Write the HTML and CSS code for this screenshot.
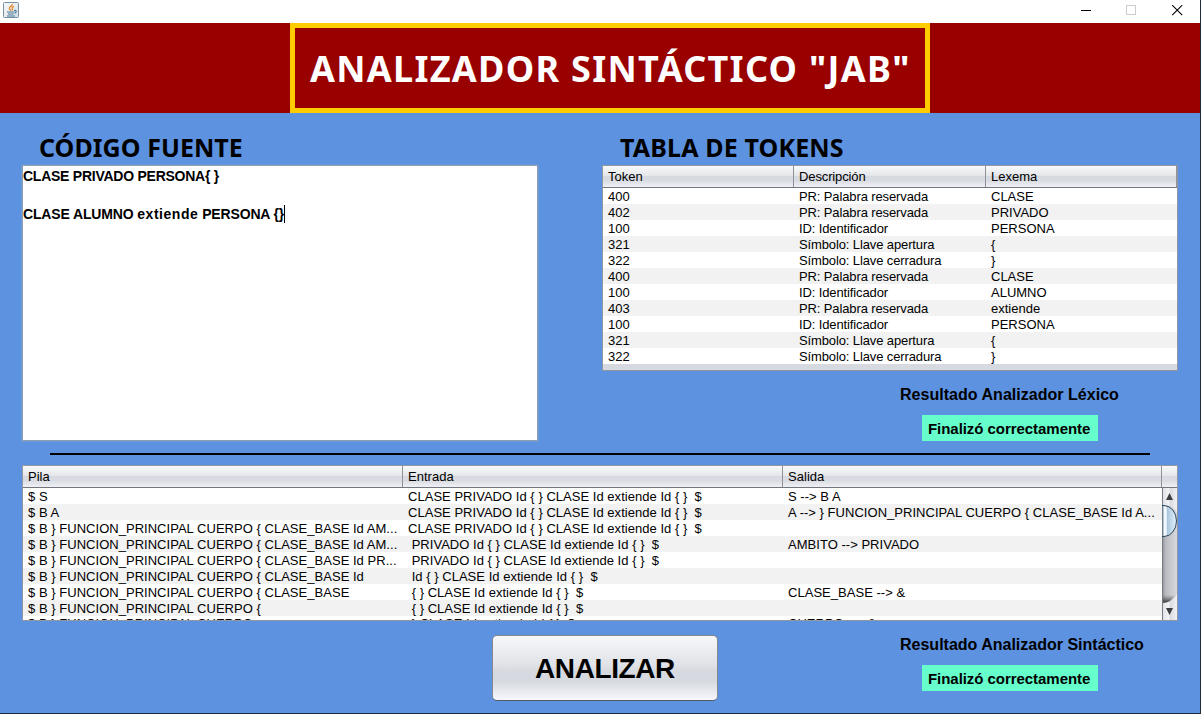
FILE: index.html
```html
<!DOCTYPE html>
<html lang="es">
<head>
<meta charset="utf-8">
<title>Analizador Sintáctico</title>
<link rel="stylesheet" href="styles.css">
</head>
<body>
<div class="window">
  <div class="titlebar">
    <svg class="java" width="16" height="16" viewBox="0 0 16 16">
      <defs><linearGradient id="jb" x2="1" y2="1"><stop offset="0" stop-color="#f8fafb"/><stop offset="1" stop-color="#d3dde4"/></linearGradient></defs>
      <rect x=".5" y=".5" width="15" height="15" rx="1" fill="url(#jb)" stroke="#7890a2"/>
      <path d="M9.500 2c.300 1.500-3.200 2.300-3.200 4.200 0 1 1 1.400 1.400 2.500M11 4.300c-1.600.6-2.400 1.300-1.800 2.100.6.700.2 1.400-.5 2.100" fill="none" stroke="#e8862a" stroke-width="1.300"/>
      <path d="M4 10h7M5 12h5.500M4 14h8" stroke="#4b7b9c" stroke-width="1.200"/>
      <path d="M11 8.600c3-.8 2.800 2 .2 2.600" fill="none" stroke="#4b7b9c" stroke-width="1.200"/>
    </svg>
    <svg class="controls" width="102" height="11" viewBox="0 0 102 11">
      <path d="M0 5.500h10" stroke="#000"/>
      <rect x="45.500" y=".5" width="9" height="9" fill="none" stroke="#ccc"/>
      <path d="M91.200.2l10 10M101.200.2l-10 10" stroke="#000" stroke-width="1.100"/>
    </svg>
  </div>
  <div class="banner"><h1><span>ANALIZADOR SINTÁCTICO "JAB"</span></h1></div>
  <div class="upper">
    <div class="source">
      <h2 class="h-source">CÓDIGO FUENTE</h2>
      <div class="editor"><div class="l1">CLASE PRIVADO PERSONA{ }</div><div>&nbsp;</div><div class="l3">CLASE ALUMNO <span class="word">extiende</span> PERSONA {}<i class="caret"></i></div></div>
    </div>
    <div class="tokens">
      <h2 class="h-tokens">TABLA DE TOKENS</h2>
      <div class="table token-table">
        <div class="row head"><span>Token</span><span>Descripción</span><span>Lexema</span></div>
        <div class="row"><span>400</span><span>PR: Palabra reservada</span><span>CLASE</span></div>
        <div class="row"><span>402</span><span>PR: Palabra reservada</span><span>PRIVADO</span></div>
        <div class="row"><span>100</span><span>ID: Identificador</span><span>PERSONA</span></div>
        <div class="row"><span>321</span><span>Símbolo: Llave apertura</span><span>{</span></div>
        <div class="row"><span>322</span><span>Símbolo: Llave cerradura</span><span>}</span></div>
        <div class="row"><span>400</span><span>PR: Palabra reservada</span><span>CLASE</span></div>
        <div class="row"><span>100</span><span>ID: Identificador</span><span>ALUMNO</span></div>
        <div class="row"><span>403</span><span>PR: Palabra reservada</span><span>extiende</span></div>
        <div class="row"><span>100</span><span>ID: Identificador</span><span>PERSONA</span></div>
        <div class="row"><span>321</span><span>Símbolo: Llave apertura</span><span>{</span></div>
        <div class="row"><span>322</span><span>Símbolo: Llave cerradura</span><span>}</span></div>
      </div>
      <div class="result r-lex"><div class="label lex">Resultado Analizador Léxico</div><div class="ok">Finalizó correctamente</div></div>
    </div>
  </div>
  <div class="rule"></div>
  <div class="table stack-table">
    <div class="row head"><span>Pila</span><span>Entrada</span><span>Salida</span><span></span></div>
    <div class="viewport">
      <div class="rows">
        <div class="row"><span>$ S</span><span>CLASE PRIVADO Id { } CLASE Id extiende Id { }  $</span><span>S --&gt; B A</span></div>
        <div class="row"><span>$ B A</span><span>CLASE PRIVADO Id { } CLASE Id extiende Id { }  $</span><span>A --&gt; } FUNCION_PRINCIPAL CUERPO { CLASE_BASE Id A...</span></div>
        <div class="row"><span>$ B } FUNCION_PRINCIPAL CUERPO { CLASE_BASE Id AM...</span><span>CLASE PRIVADO Id { } CLASE Id extiende Id { }  $</span><span></span></div>
        <div class="row"><span>$ B } FUNCION_PRINCIPAL CUERPO { CLASE_BASE Id AM...</span><span> PRIVADO Id { } CLASE Id extiende Id { }  $</span><span>AMBITO --&gt; PRIVADO</span></div>
        <div class="row"><span>$ B } FUNCION_PRINCIPAL CUERPO { CLASE_BASE Id PR...</span><span> PRIVADO Id { } CLASE Id extiende Id { }  $</span><span></span></div>
        <div class="row"><span>$ B } FUNCION_PRINCIPAL CUERPO { CLASE_BASE Id</span><span> Id { } CLASE Id extiende Id { }  $</span><span></span></div>
        <div class="row"><span>$ B } FUNCION_PRINCIPAL CUERPO { CLASE_BASE</span><span> { } CLASE Id extiende Id { }  $</span><span>CLASE_BASE --&gt; &amp;</span></div>
        <div class="row"><span>$ B } FUNCION_PRINCIPAL CUERPO {</span><span> { } CLASE Id extiende Id { }  $</span><span></span></div>
        <div class="row"><span>$ B } FUNCION_PRINCIPAL CUERPO</span><span> } CLASE Id extiende Id { }  $</span><span>CUERPO --&gt; &amp;</span></div>
      </div>
      <svg class="scroll" width="15" height="132" viewBox="0 0 15 132">
        <defs>
          <linearGradient id="tr"><stop offset="0" stop-color="#8e9095"/><stop offset=".25" stop-color="#b9bbc1"/><stop offset="1" stop-color="#d8d9de"/></linearGradient>
          <linearGradient id="bt"><stop offset="0" stop-color="#dcdfe4"/><stop offset=".45" stop-color="#f3f4f6"/><stop offset=".55" stop-color="#d8dbe1"/><stop offset="1" stop-color="#eff1f5"/></linearGradient>
          <linearGradient id="th"><stop offset="0" stop-color="#8fb0cb"/><stop offset=".12" stop-color="#fafcff"/><stop offset=".25" stop-color="#edf5fa"/><stop offset=".3" stop-color="#a9c5db"/><stop offset="1" stop-color="#e2f3fe"/></linearGradient>
          <linearGradient id="sh" x2="0" y2="1"><stop offset="0" stop-color="#555" stop-opacity="0"/><stop offset="1" stop-color="#333"/></linearGradient>
        </defs>
        <rect width="15" height="132" fill="url(#tr)"/>
        <path d="M0 107h14L8 113Q6 115 0 115z" fill="url(#sh)"/>
        <path d="M0 0h15v24Q10 17 0 17zM0 132V115Q10 115 15 106v26z" fill="url(#bt)"/>
        <path d="M.5 0v132" stroke="#777b83"/>
        <path d="M1 17.500A13.500 15.500 0 0 1 1 48.500z" fill="url(#th)"/>
        <path d="M0 17.500h2A12.500 15.500 0 0 1 2 48.500H0" fill="none" stroke="#2c465b"/>
        <path d="M4 12l3.500-7L11 12zM4 120l3.500 7 3.500-7z" fill="#3b3d41"/>
      </svg>
    </div>
  </div>
  <div class="footer">
    <button class="analyze"><span>ANALIZAR</span></button>
    <div class="result r-sin"><div class="label sin">Resultado Analizador Sintáctico</div><div class="ok">Finalizó correctamente</div></div>
  </div>
</div>
</body>
</html>
```
FILE: styles.css
```css
* { box-sizing: border-box; }
body { margin: 0; background: #1d2b3b; font-family: "Liberation Sans", Arial, sans-serif; color: #000; overflow: hidden; }
.window { width: 1200px; height: 713px; background: #5c92e0; overflow: hidden; }
.titlebar { height: 23px; background: #fff; display: flex; justify-content: space-between; padding: 2px 17px 0 3px; }
.controls { margin-top: 3px; }
.banner { height: 90px; background: #900; padding-left: 290px; }
h1 { margin: 0; width: 640px; height: 90px; border: 5px solid #fc0; padding-left: 15px; color: #fff; font: bold 36px/82px "Noto Sans", sans-serif; letter-spacing: 1.3px; white-space: nowrap; }
h2 { margin: 0; height: 52px; padding-top: 18px; font: bold 25px/32px "Noto Sans", sans-serif; white-space: nowrap; }
.upper { height: 340px; display: flex; }
.source { width: 602px; padding-left: 22px; }
.h-source { padding-left: 17px; letter-spacing: .06px; }
.h-tokens { padding-left: 18px; letter-spacing: .14px; }
.editor { width: 516px; height: 276px; background: #fff; border: 1px solid #8f9db0; box-shadow: 0 0 0 1px #6b9cd9; font-weight: bold; font-size: 14px; line-height: 19px; padding-top: 1px; white-space: pre; }
.l1 { letter-spacing: -.25px; }
.l3 { letter-spacing: -.15px; }
.word { letter-spacing: .55px; }
.caret { display: inline-block; width: 1px; height: 18px; background: #000; vertical-align: -4px; }
.tokens { width: 576px; }
.table { border: 1px solid #9297a1; background: #d6d9df; font-size: 13px; }
.token-table { height: 206px; }
.row { display: grid; height: 16px; line-height: 17px; background: #fff; white-space: pre; }
.row span { padding-left: 5px; overflow: hidden; }
.row:nth-child(odd) { background: #f2f2f2; }
.row.head { height: 22px; line-height: 22px; background: linear-gradient(#f9fafb, #e3e5e9 48%, #d6d9df 50%, #d9dce2 70%, #eff1f7); border-bottom: 1px solid #73757e; }
.head span { border-right: 1px solid #8f9299; }
.token-table .row { grid-template-columns: 191px 192px 191px; }
.token-table .row span:nth-child(2) { letter-spacing: -.12px; }
.result { width: 220px; }
.label { font-size: 16px; font-weight: bold; line-height: 20px; white-space: nowrap; }
.lex { letter-spacing: .03px; }
.r-lex { margin: 14px 0 0 298px; }
.ok { width: 176px; height: 26px; margin: 10px 0 0 22px; padding-left: 6px; background: #6fc; font-size: 15px; font-weight: bold; line-height: 27px; letter-spacing: -.05px; white-space: nowrap; }
.rule { width: 1100px; height: 2px; background: #000; margin-left: 50px; }
.stack-table { width: 1156px; height: 156px; margin: 10px 0 0 22px; letter-spacing: .03px; }
.stack-table .row { grid-template-columns: 380px 380px 379px 15px; }
.head span:last-child { padding: 0; }
.token-table .head span:last-child { padding-left: 5px; }
.stack-table .head span:last-child { border: 0; }
.viewport { height: 132px; display: flex; overflow: hidden; }
.rows { width: 1139px; }
.rows .row { grid-template-columns: 380px 380px 379px; }
.rows .row:nth-child(odd) { background: #fff; }
.rows .row:nth-child(even) { background: #f2f2f2; }
.rows .row:last-child { line-height: 15px; }
.footer { display: flex; padding-left: 492px; }
.analyze { width: 226px; height: 66px; margin-top: 14px; padding: 2px 0 0; border: 1px solid #85898f; border-bottom-color: #555963; border-radius: 5px; background: linear-gradient(#f7f8fa, #e0e2e7 45%, #d6d9df 55%, #d6d9df 70%, #f7f7ff); font: bold 28px "Liberation Sans", Arial, sans-serif; letter-spacing: -.4px; color: #000; }
.r-sin { margin: 14px 0 0 182px; }
```
